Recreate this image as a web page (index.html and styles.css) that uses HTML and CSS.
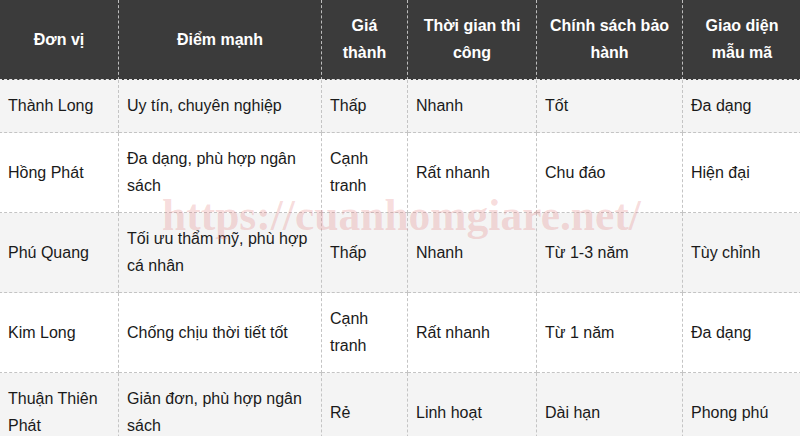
FILE: index.html
```html
<!DOCTYPE html>
<html lang="vi">
<head>
<meta charset="utf-8">
<title>So sánh đơn vị</title>
<link rel="stylesheet" href="styles.css">
</head>
<body>
<div class="frame">
<table class="cmp">
<colgroup>
<col class="c1"><col class="c2"><col class="c3"><col class="c4"><col class="c5"><col class="c6">
</colgroup>
<thead>
<tr><th>Đơn vị</th><th>Điểm mạnh</th><th>Giá thành</th><th>Thời gian thi công</th><th>Chính sách bảo hành</th><th>Giao diện mẫu mã</th></tr>
</thead>
<tbody>
<tr><td>Thành Long</td><td>Uy tín, chuyên nghiệp</td><td>Thấp</td><td>Nhanh</td><td>Tốt</td><td>Đa dạng</td></tr>
<tr><td>Hồng Phát</td><td>Đa dạng, phù hợp ngân sách</td><td>Cạnh tranh</td><td>Rất nhanh</td><td>Chu đáo</td><td>Hiện đại</td></tr>
<tr><td>Phú Quang</td><td>Tối ưu thẩm mỹ, phù hợp cá nhân</td><td>Thấp</td><td>Nhanh</td><td>Từ 1-3 năm</td><td>Tùy chỉnh</td></tr>
<tr><td>Kim Long</td><td>Chống chịu thời tiết tốt</td><td>Cạnh tranh</td><td>Rất nhanh</td><td>Từ 1 năm</td><td>Đa dạng</td></tr>
<tr><td>Thuận Thiên Phát</td><td>Giản đơn, phù hợp ngân sách</td><td>Rẻ</td><td>Linh hoạt</td><td>Dài hạn</td><td>Phong phú</td></tr>
</tbody>
</table>
<div class="watermark">https://cuanhomgiare.net/</div>
</div>
</body>
</html>
```
FILE: styles.css
```css
html, body {
  margin: 0;
  padding: 0;
  background: #ffffff;
}
.frame {
  position: relative;
  width: 800px;
  height: 436px;
  overflow: hidden;
}
.cmp {
  border-collapse: collapse;
  table-layout: fixed;
  width: 802px;
  margin-left: -1px;
  font-family: "Liberation Sans", Arial, sans-serif;
  font-size: 16px;
  line-height: 27px;
  color: #1a1a1a;
}
.c1 { width: 119px; }
.c2 { width: 203px; }
.c3 { width: 86px; }
.c4 { width: 129px; }
.c5 { width: 146px; }
.c6 { width: 119px; }
.cmp th {
  background: #3b3b3b;
  color: #ffffff;
  font-weight: bold;
  text-align: center;
  vertical-align: middle;
  padding: 12px 8px 13px;
  border: 1px dashed #bdbdbd;
  border-top: none;
  border-bottom: 1px dashed #e6e6e6;
}
.cmp td {
  text-align: left;
  vertical-align: middle;
  padding: 12px 8px 13px 8px;
  border: 1px dashed #c4c4c4;
}
.cmp tbody tr:nth-child(odd) td {
  background: #f4f4f4;
}
.cmp tbody tr:nth-child(even) td {
  background: #ffffff;
}
.watermark {
  position: absolute;
  left: 162px;
  top: 190px;
  font-family: "Liberation Serif", "Times New Roman", serif;
  font-weight: bold;
  font-size: 43.5px;
  line-height: 50px;
  color: rgba(225, 120, 120, 0.26);
  pointer-events: none;
  white-space: nowrap;
}
```
